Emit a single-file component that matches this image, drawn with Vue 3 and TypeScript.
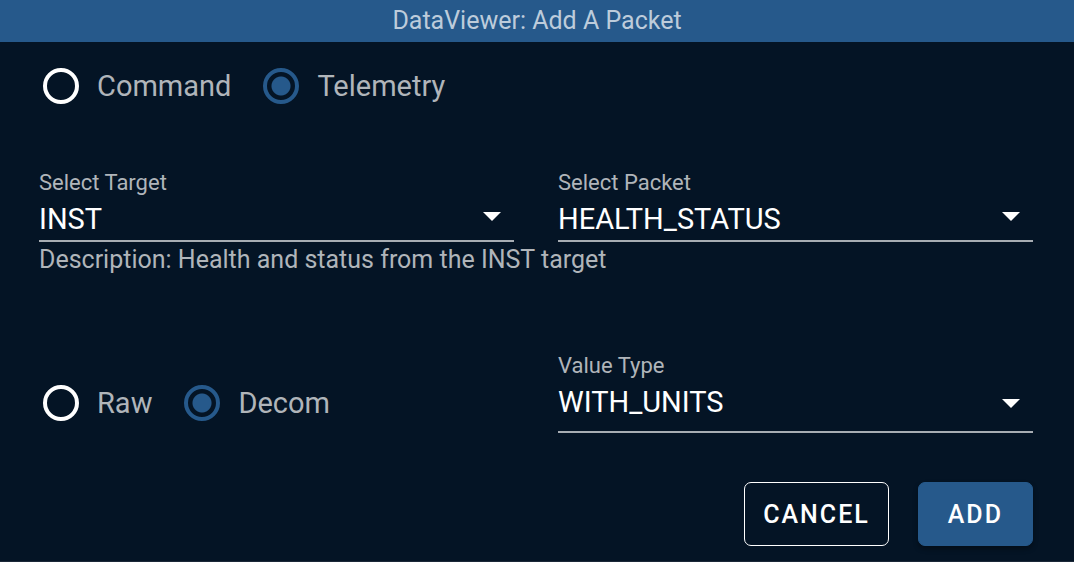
<script setup lang="ts">
import { ref } from 'vue'

interface Choice {
  value: string
  label: string
}

const kinds: Choice[] = [
  { value: 'cmd', label: 'Command' },
  { value: 'tlm', label: 'Telemetry' },
]
const modes: Choice[] = [
  { value: 'raw', label: 'Raw' },
  { value: 'decom', label: 'Decom' },
]

const kind = ref('tlm')
const mode = ref('decom')
const target = ref('INST')
const packet = ref('HEALTH_STATUS')
const valueType = ref('WITH_UNITS')
</script>

<template>
  <form class="dialog" @submit.prevent>
    <header class="bar"><h1 class="title">DataViewer: Add A Packet</h1></header>
    <div class="content">
      <div class="radios" role="radiogroup" aria-label="Packet kind">
        <label v-for="k in kinds" :key="k.value" class="choice">
          <input v-model="kind" class="radio" type="radio" name="kind" :value="k.value" />
          <span>{{ k.label }}</span>
        </label>
      </div>

      <div class="columns pickers">
        <div class="field">
          <label class="caption" for="target">Select Target</label>
          <div class="box">
            <select id="target" v-model="target" class="select">
              <option>INST</option>
            </select>
            <svg class="arrow" viewBox="0 0 18 9" aria-hidden="true"><path d="M0 0h18l-9 9z" /></svg>
          </div>
        </div>
        <div class="field">
          <label class="caption" for="packet">Select Packet</label>
          <div class="box">
            <select id="packet" v-model="packet" class="select">
              <option>HEALTH_STATUS</option>
            </select>
            <svg class="arrow" viewBox="0 0 18 9" aria-hidden="true"><path d="M0 0h18l-9 9z" /></svg>
          </div>
        </div>
      </div>
      <p class="description">Description: Health and status from the INST target</p>

      <div class="columns options">
        <div class="radios" role="radiogroup" aria-label="Display mode">
          <label v-for="m in modes" :key="m.value" class="choice">
            <input v-model="mode" class="radio" type="radio" name="mode" :value="m.value" />
            <span>{{ m.label }}</span>
          </label>
        </div>
        <div class="field">
          <label class="caption" for="value-type">Value Type</label>
          <div class="box tall">
            <select id="value-type" v-model="valueType" class="select">
              <option>WITH_UNITS</option>
            </select>
            <svg class="arrow" viewBox="0 0 18 9" aria-hidden="true"><path d="M0 0h18l-9 9z" /></svg>
          </div>
        </div>
      </div>

      <div class="actions">
        <button class="button outlined" type="button">CANCEL</button>
        <button class="button primary" type="submit">ADD</button>
      </div>
    </div>
  </form>
</template>

<style>
body {
  background: #041425;
}
</style>

<style scoped>
.dialog {
  min-height: 100vh;
  box-sizing: border-box;
  border-bottom: 1px solid #1b2838;
  background: #041425;
  color: #b0b5ba;
  font-family: Roboto, "Liberation Sans", sans-serif;
}
.bar {
  height: 42px;
  background: #26598b;
  text-align: center;
}
.title {
  margin: 0;
  color: #bdccdb;
  font-size: 25px;
  font-weight: 400;
  line-height: 42px;
}
.content {
  padding: 24px 41px 15px 39px;
}
.radios {
  display: flex;
  gap: 32px;
  padding-left: 4px;
}
.choice {
  display: flex;
  align-items: center;
  gap: 18px;
  height: 40px;
  font-size: 29px;
}
.radio {
  appearance: none;
  width: 36px;
  height: 36px;
  margin: 0;
  border: 4px solid #fff;
  border-radius: 50%;
}
.radio:checked {
  border-color: #26598b;
  background: radial-gradient(circle, #26598b 9px, transparent 10px);
}
.columns {
  display: grid;
  grid-template-columns: 1fr 1fr;
  gap: 44px;
}
.pickers {
  margin-top: 63px;
}
.caption {
  display: block;
  font-size: 22px;
  line-height: 28px;
}
.box {
  position: relative;
  height: 43px;
  border-bottom: 2px solid #a7adb3;
}
.box.tall {
  height: 51px;
}
.select {
  appearance: none;
  display: block;
  width: 100%;
  height: 43px;
  margin: 0;
  padding: 0;
  border: 0;
  background: transparent;
  color: #fff;
  font-family: inherit;
  font-size: 29px;
}
.arrow {
  position: absolute;
  top: 15px;
  right: 13px;
  width: 18px;
  height: 9px;
  fill: #fff;
  pointer-events: none;
}
.tall .arrow {
  top: 19px;
}
.description {
  margin: 0;
  font-size: 25px;
  line-height: 36px;
}
.options {
  align-items: end;
  margin-top: 74px;
}
.options .radios {
  padding-bottom: 10px;
}
.actions {
  display: flex;
  justify-content: flex-end;
  gap: 29px;
  margin-top: 49px;
}
.button {
  height: 64px;
  padding: 0 18px;
  border: 1px solid #fff;
  border-radius: 7px;
  background: transparent;
  color: #fff;
  font-family: inherit;
  font-size: 25px;
  font-weight: 500;
  letter-spacing: 2px;
}
.primary {
  padding: 0 29px;
  border-color: #26598b;
  background: #26598b;
  box-shadow: 0 3px 5px rgb(0 0 0 / 35%);
}
</style>
